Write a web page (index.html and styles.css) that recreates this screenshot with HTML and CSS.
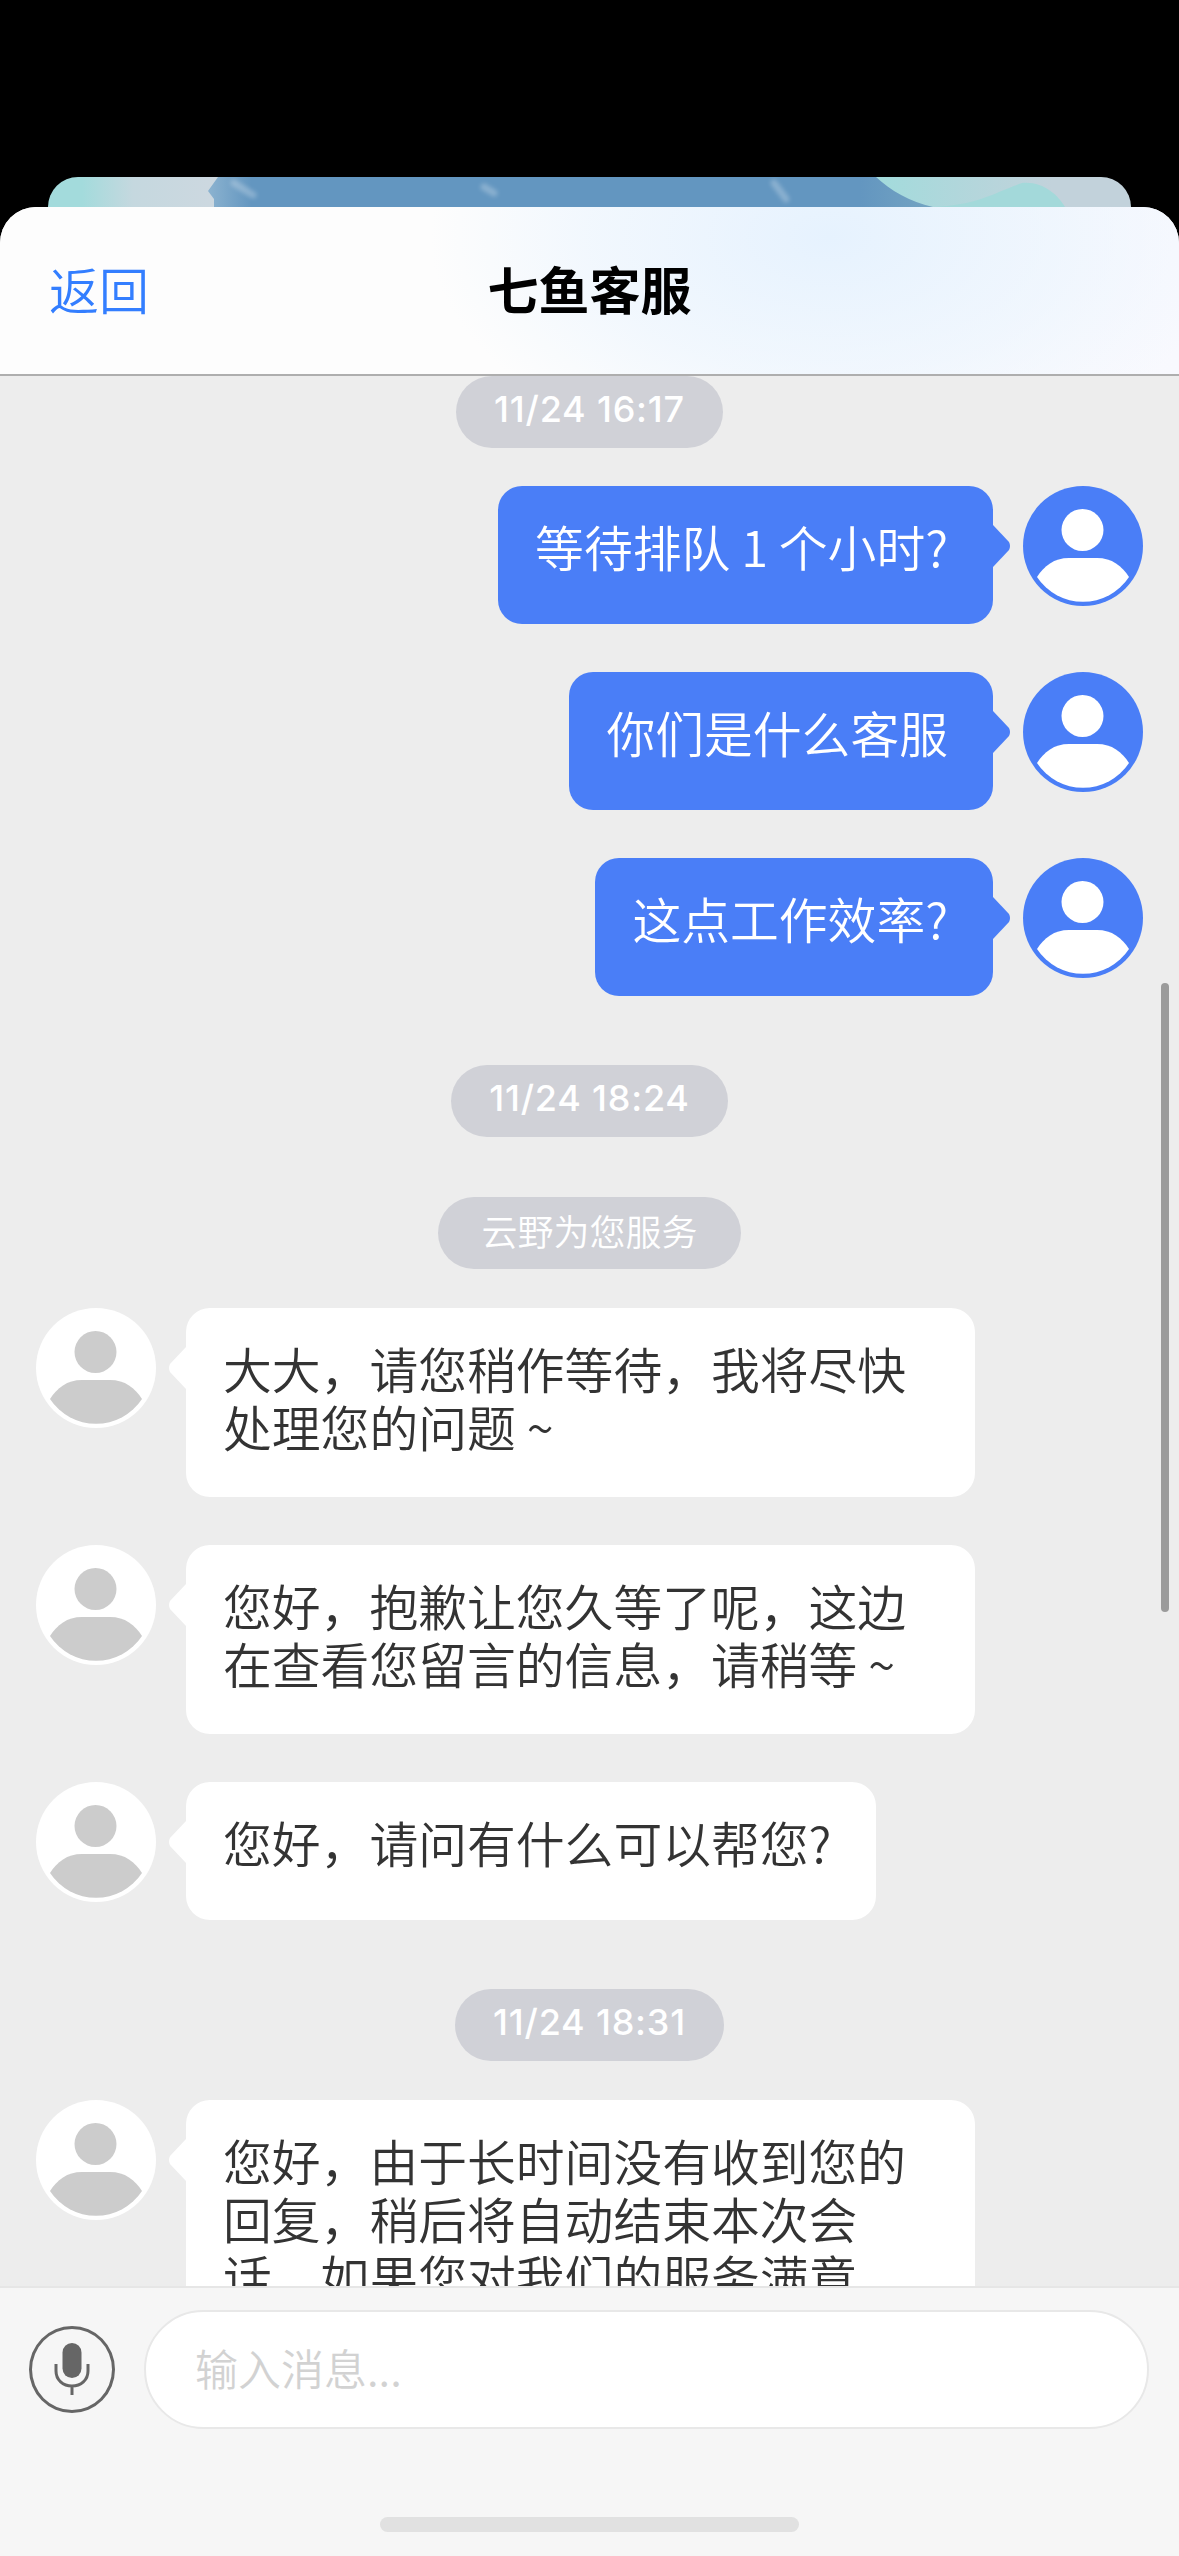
FILE: index.html
```html
<!DOCTYPE html>
<html lang="zh-CN">
<head>
    <meta charset="UTF-8">
    <meta name="viewport" content="width=device-width, initial-scale=1.0">
    <title>七鱼客服</title>
    <link rel="stylesheet" href="styles.css">
</head>
<body>
    <svg class="defs" width="0" height="0">
        <symbol id="person" viewBox="0 0 120 120">
            <ellipse cx="59.5" cy="44" rx="21" ry="21"/>
            <path d="M14 91C21 80 31 72 46 72H74C89 72 99 80 106 91A55 55 0 0 1 14 91Z"/>
        </symbol>
        <linearGradient id="left-fade" x1="0" x2="1" y1="0" y2="0">
            <stop offset="0.2" stop-color="#a3dbdc"/>
            <stop offset="0.5" stop-color="#c5d8df"/>
            <stop offset="1" stop-color="#cdd8e0"/>
        </linearGradient>
        <linearGradient id="right-fade" x1="0" x2="1" y1="0" y2="0">
            <stop offset="0.05" stop-color="#a3dbdc"/>
            <stop offset="0.7" stop-color="#c2d2db"/>
        </linearGradient>
        <linearGradient id="blue-fade" x1="0" x2="1" y1="0" y2="0">
            <stop offset="0" stop-color="#8cb3d0"/>
            <stop offset="0.06" stop-color="#6396c0"/>
            <stop offset="0.9" stop-color="#6396c0"/>
            <stop offset="1" stop-color="#74a4c2"/>
        </linearGradient>
    </svg>

    <div class="backdrop">
        <svg class="wallpaper" width="1083" height="40" viewBox="0 0 1083 40">
            <rect width="170" height="40" fill="url(#left-fade)"/>
            <rect x="820" width="263" height="40" fill="url(#right-fade)"/>
            <path d="M170 0H828C842 13 862 25 885 30V40H166V22L160 14Z" fill="url(#blue-fade)"/>
            <path d="M860 40L885 30C930 28 945 16 974 6C995 4 1010 18 1017 30V40Z" fill="#a3d9da"/>
            <path class="glint" d="M436 10L446 16"/>
            <path class="glint" d="M726 6L738 22"/>
            <path class="glint" d="M186 6L205 18"/>
        </svg>
    </div>

    <div class="sheet">
        <header class="header">
            <a class="back">返回</a>
            <h1 class="title">七鱼客服</h1>
        </header>

        <main class="messages">
            <div class="pill time first">11/24 16:17</div>

            <div class="row mine">
                <div class="bubble">等待排队 1 个小时?</div>
                <svg class="avatar"><use href="#person"/></svg>
            </div>
            <div class="row mine">
                <div class="bubble">你们是什么客服</div>
                <svg class="avatar"><use href="#person"/></svg>
            </div>
            <div class="row mine">
                <div class="bubble">这点工作效率?</div>
                <svg class="avatar"><use href="#person"/></svg>
            </div>

            <div class="pill time">11/24 18:24</div>
            <div class="pill notice">云野为您服务</div>

            <div class="row theirs">
                <svg class="avatar"><use href="#person"/></svg>
                <div class="bubble">大大，请您稍作等待，我将尽快处理您的问题 ~</div>
            </div>
            <div class="row theirs">
                <svg class="avatar"><use href="#person"/></svg>
                <div class="bubble">您好，抱歉让您久等了呢，这边在查看您留言的信息，请稍等 ~</div>
            </div>
            <div class="row theirs">
                <svg class="avatar"><use href="#person"/></svg>
                <div class="bubble">您好，请问有什么可以帮您?</div>
            </div>

            <div class="pill time">11/24 18:31</div>

            <div class="row theirs">
                <svg class="avatar"><use href="#person"/></svg>
                <div class="bubble">您好，由于长时间没有收到您的回复，稍后将自动结束本次会话，如果您对我们的服务满意</div>
            </div>

            <div class="scrollbar"></div>
        </main>

        <footer class="footer">
            <div class="input-row">
                <div class="mic">
                    <svg width="38" height="54" viewBox="0 0 38 54">
                        <rect class="mic-body" x="9.5" y="0" width="19" height="35" rx="9.5"/>
                        <path class="mic-stand" d="M3 21V28C3 37 10 43 19 43C28 43 35 37 35 28V21M19 43V52"/>
                    </svg>
                </div>
                <div class="input">输入消息...</div>
            </div>
            <div class="home-bar"></div>
        </footer>
    </div>
</body>
</html>
```
FILE: styles.css
```css
* {
    box-sizing: border-box;
}
html, body {
    margin: 0;
    height: 2556px;
    overflow: hidden;
}
body {
    padding-top: 177px;
    background-color: #000;
    font-family: "Noto Sans CJK SC", sans-serif;
    color: #333;
}
.defs {
    position: absolute;
}

/* card peeking out behind the sheet */
.backdrop {
    height: 40px;
    margin: 0 48px -10px;
    border-radius: 30px 30px 0 0;
    overflow: hidden;
}
.wallpaper {
    display: block;
}
.glint {
    fill: none;
    stroke: #fff;
    stroke-width: 7;
    stroke-linecap: round;
    opacity: 0.25;
    filter: blur(2px);
}

.sheet {
    position: relative;
    display: flex;
    flex-direction: column;
    height: 2349px;
    border-radius: 36px 36px 0 0;
    overflow: hidden;
    background-color: #ededed;
}

.header {
    position: relative;
    flex: none;
    display: flex;
    align-items: center;
    justify-content: center;
    height: 169px;
    padding-bottom: 6px;
    border-bottom: 2px solid #aeaeae;
    background:
        radial-gradient(ellipse 400px 230px at 830px 30px, #e6f2fe 0, rgba(234, 244, 254, 0.6) 60%, transparent 100%),
        linear-gradient(90deg, #fdfdfd 60%, #f8f9fe 100%);
}
.back {
    position: absolute;
    left: 49px;
    font-size: 50px;
    font-weight: 350;
    color: #337eff;
}
.title {
    margin: 0;
    font-size: 51px;
    font-weight: 700;
    color: #000;
}

.messages {
    position: relative;
    flex: 1;
    display: flex;
    flex-direction: column;
    min-height: 0;
    overflow: hidden;
}

.pill {
    flex: none;
    align-self: center;
    height: 72px;
    margin: 21px 0 39px;
    padding: 0 38px;
    border-radius: 36px;
    background-color: #d0d1d7;
    color: #fff;
    font-size: 36px;
    line-height: 66px;
}
.pill.first {
    margin: 0 0 38px;
}
.pill.time {
    font-family: Inter, "Noto Sans CJK SC", sans-serif;
    font-weight: 500;
    letter-spacing: 0.8px;
}
.pill.notice {
    padding: 0 43px;
    font-weight: 350;
}

.row {
    flex: none;
    display: flex;
    align-items: flex-start;
    gap: 30px;
    margin-bottom: 48px;
}
.row.mine {
    justify-content: flex-end;
    padding-right: 36px;
}
.row.theirs {
    padding-left: 36px;
}

.avatar {
    flex: none;
    width: 120px;
    height: 120px;
    border-radius: 50%;
}
.mine .avatar {
    background-color: #4a7ef7;
    fill: #fff;
}
.theirs .avatar {
    background-color: #fff;
    fill: #ccc;
}

.bubble {
    position: relative;
    min-height: 138px;
    padding: 31px 45px 42px 37px;
    border-radius: 24px;
    font-size: 48.8px;
    font-weight: 350;
    line-height: 58px;
}
.mine .bubble {
    background-color: #4a7ef7;
    color: #fff;
}
.theirs .bubble {
    max-width: 789px;
    background-color: #fff;
}
.bubble::after {
    content: "";
    position: absolute;
    top: 39px;
    width: 18px;
    height: 42px;
}
.mine .bubble::after {
    right: -18px;
    background-color: #4a7ef7;
    clip-path: path("M0 0L16 17Q18 21 16 25L0 42Z");
}
.theirs .bubble::after {
    left: -18px;
    background-color: #fff;
    clip-path: path("M18 0L2 17Q0 21 2 25L18 42Z");
}

.scrollbar {
    position: absolute;
    top: 607px;
    right: 10px;
    width: 8px;
    height: 629px;
    border-radius: 4px;
    background-color: #9b9b9b;
}

.footer {
    flex: none;
    height: 270px;
    padding-top: 22px;
    border-top: 2px solid #e6e6e6;
    background-color: #f6f6f6;
}
.input-row {
    display: flex;
    align-items: center;
    gap: 29px;
    padding: 0 30px 0 29px;
}
.mic {
    flex: none;
    display: flex;
    justify-content: center;
    align-items: center;
    width: 86px;
    height: 87px;
    border: 3px solid #666;
    border-radius: 50%;
}
.mic-body {
    fill: #666;
}
.mic-stand {
    fill: none;
    stroke: #666;
    stroke-width: 3;
}
.input {
    flex: 1;
    height: 119px;
    padding-left: 49px;
    border: 2px solid #e8e8e8;
    border-radius: 60px;
    background-color: #fff;
    color: #d2d2d2;
    font-size: 43px;
    font-weight: 350;
    line-height: 110px;
}
.home-bar {
    width: 419px;
    height: 15px;
    margin: 88px auto 0;
    border-radius: 8px;
    background-color: #e1e1e1;
}
```
